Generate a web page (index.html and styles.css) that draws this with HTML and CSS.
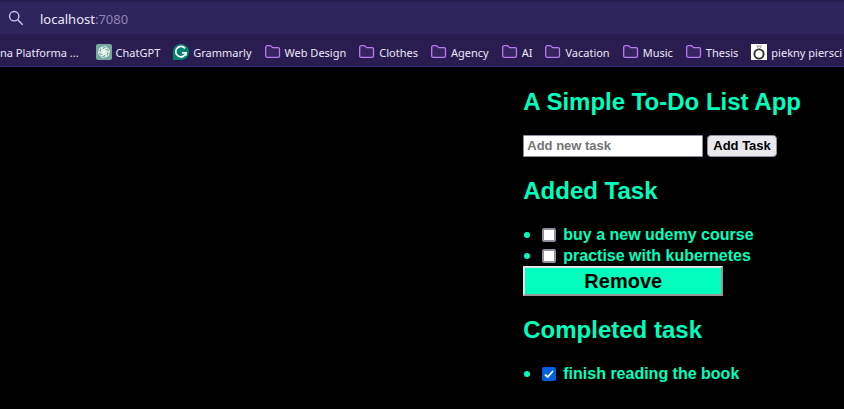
FILE: index.html
```html
<!DOCTYPE html>
<html lang="en">
<head>
<meta charset="utf-8">
<title>A Simple To-Do List App</title>
<link rel="stylesheet" href="styles.css">
</head>
<body>
<svg class="defs" aria-hidden="true">
  <symbol id="folder" viewBox="0 0 16 16">
    <path d="M.7 11.7V3.3Q.7 1.7 2.3 1.7H5.2Q5.9 1.7 6.3 2.3L7 3.2Q7.3 3.6 7.9 3.6H13Q14.5 3.6 14.5 5.1V11.7Q14.5 13.3 12.9 13.3H2.3Q.7 13.3.7 11.7Z" fill="#37255f" stroke="#b77af0" stroke-width="1.3"/>
  </symbol>
</svg>
<header class="browser">
  <div class="address">
    <svg class="search" viewBox="0 0 16 16" aria-hidden="true"><circle cx="6.2" cy="6.2" r="4.7"/><path d="M9.7 9.7L14.7 14.7"/></svg>
    <span class="url">localhost<span class="port">:7080</span></span>
  </div>
  <nav class="bookmarks">
    <a class="bookmark" href="#"><span>na Platforma ...</span></a>
    <a class="bookmark" href="#"><svg class="icon" viewBox="0 0 16 16"><rect width="16" height="16" rx="2" fill="#74aa9c"/><g fill="none" stroke="#fff" stroke-width=".8"><path id="petal" d="M6 8.9V5.1Q6 2.5 8.4 2.4Q10 2.4 10.8 3.6L7.4 5.5V9.6"/><use href="#petal" transform="rotate(60 8 8)"/><use href="#petal" transform="rotate(120 8 8)"/><use href="#petal" transform="rotate(180 8 8)"/><use href="#petal" transform="rotate(240 8 8)"/><use href="#petal" transform="rotate(300 8 8)"/></g></svg><span>ChatGPT</span></a>
    <a class="bookmark" href="#"><svg class="icon" viewBox="0 0 16 16"><path d="M8 0A8 8 0 1 1 8 16H0V8A8 8 0 0 1 8 0Z" fill="#028370"/><path d="M12 4.4A5.2 5.2 0 1 0 13 8.9H9M12.9 8.9V11.8" fill="none" stroke="#fff" stroke-width="1.7"/></svg><span>Grammarly</span></a>
    <a class="bookmark" href="#"><svg class="icon"><use href="#folder"/></svg><span>Web Design</span></a>
    <a class="bookmark" href="#"><svg class="icon"><use href="#folder"/></svg><span>Clothes</span></a>
    <a class="bookmark" href="#"><svg class="icon"><use href="#folder"/></svg><span>Agency</span></a>
    <a class="bookmark" href="#"><svg class="icon"><use href="#folder"/></svg><span>AI</span></a>
    <a class="bookmark" href="#"><svg class="icon"><use href="#folder"/></svg><span>Vacation</span></a>
    <a class="bookmark" href="#"><svg class="icon"><use href="#folder"/></svg><span>Music</span></a>
    <a class="bookmark" href="#"><svg class="icon"><use href="#folder"/></svg><span>Thesis</span></a>
    <a class="bookmark" href="#"><svg class="icon" viewBox="0 0 16 16"><path d="M0 0H16V16H0Z" fill="#fff"/><circle cx="8" cy="10" r="4.6" fill="none" stroke="#30302c" stroke-width="1.9"/><path d="M5.7 1L7 4.5H9L10.3 1M7 1.5L8 3L9 1.5" fill="none" stroke="#999"/></svg><span>piekny piersci</span></a>
  </nav>
</header>
<main class="app">
  <h2>A Simple To-Do List App</h2>
  <form class="add">
    <input class="new-task" type="text" placeholder="Add new task" aria-label="New task">
    <button class="add-button" type="button">Add Task</button>
  </form>
  <h2>Added Task</h2>
  <ul class="tasks">
    <li><label><input type="checkbox">buy a new udemy course</label></li>
    <li><label><input type="checkbox">practise with kubernetes</label></li>
  </ul>
  <button class="remove" type="button">Remove</button>
  <h2>Completed task</h2>
  <ul class="tasks">
    <li><label><input type="checkbox" checked>finish reading the book</label></li>
  </ul>
</main>
</body>
</html>
```
FILE: styles.css
```css
* { box-sizing: border-box; }
body {
  margin: 0;
  background: #000;
  color: #00ffbf;
  font: bold 16px/21px "Liberation Sans", Arial, sans-serif;
  overflow-x: hidden;
}
.defs { position: absolute; width: 0; height: 0; }
.browser {
  background: #291d4f;
  border-top: 2px solid #291d4f;
  border-bottom: 1px solid #3a2e78;
  color: #ece6fa;
  font: 11px/16px "Noto Sans", sans-serif;
  overflow: hidden;
}
.address {
  display: flex;
  align-items: center;
  gap: 16px;
  height: 32px;
  padding-left: 8px;
  background: #2e255c;
  font-size: 13px;
}
.search { width: 16px; height: 16px; fill: none; stroke: #cfc6ea; stroke-width: 1.4; }
.url { padding-top: 2px; }
.port { color: #8e84b4; }
.bookmarks { display: flex; align-items: center; gap: 13px; height: 32px; padding-top: 4px; }
.bookmark {
  display: flex;
  flex: none;
  align-items: center;
  gap: 4px;
  color: inherit;
  text-decoration: none;
  white-space: nowrap;
}
.bookmark:first-child { padding-right: 4px; }
.bookmark span { padding-top: 2px; }
.icon { width: 16px; height: 16px; }
.app { padding: 21px 0 24px 62%; }
h2 { margin: 0 0 20px; font-size: 24px; line-height: 27px; white-space: nowrap; }
.add { display: flex; gap: 4px; margin-bottom: 20px; }
.new-task, .add-button {
  height: 22px;
  border: 1px solid #8f8f9d;
  font: bold 13px/16px "Liberation Sans", Arial, sans-serif;
}
.new-task { width: 180px; padding: 0 3px 2px; border-radius: 1px; background: #fff; }
.new-task::placeholder { color: #757575; }
.add-button { padding: 0 5px; border-radius: 4px; background: #e9e9ed; color: #000; white-space: nowrap; }
.tasks { margin: 0; padding: 0; list-style: none; }
.tasks li { display: flex; align-items: center; gap: 11px; height: 21px; white-space: nowrap; }
.tasks li::before { content: ""; width: 6px; height: 6px; margin: 0 1px; border-radius: 50%; background: #00ffbf; }
.tasks label { display: flex; align-items: center; gap: 7px; }
.tasks input {
  appearance: none;
  width: 14px;
  height: 14px;
  margin: 1px 0 0;
  border: 2px solid #8f8f9d;
  border-radius: 2px;
  background: #fff;
}
.tasks input:checked {
  border-color: #0060df;
  background: #0060df url("data:image/svg+xml,%3Csvg xmlns='http://www.w3.org/2000/svg' viewBox='0 0 10 10'%3E%3Cpath d='M1 5.5L3.7 8L9 2' fill='none' stroke='white' stroke-width='1.8'/%3E%3C/svg%3E") center / 10px 10px no-repeat;
}
.remove {
  display: block;
  width: 200px;
  height: 30px;
  margin-bottom: 20px;
  padding: 0;
  border: 2px solid;
  border-color: #e3e3e3 #979797 #979797 #e3e3e3;
  background: #00ffbf;
  color: #000;
  font: bold 20px/24px "Liberation Sans", Arial, sans-serif;
}
```
